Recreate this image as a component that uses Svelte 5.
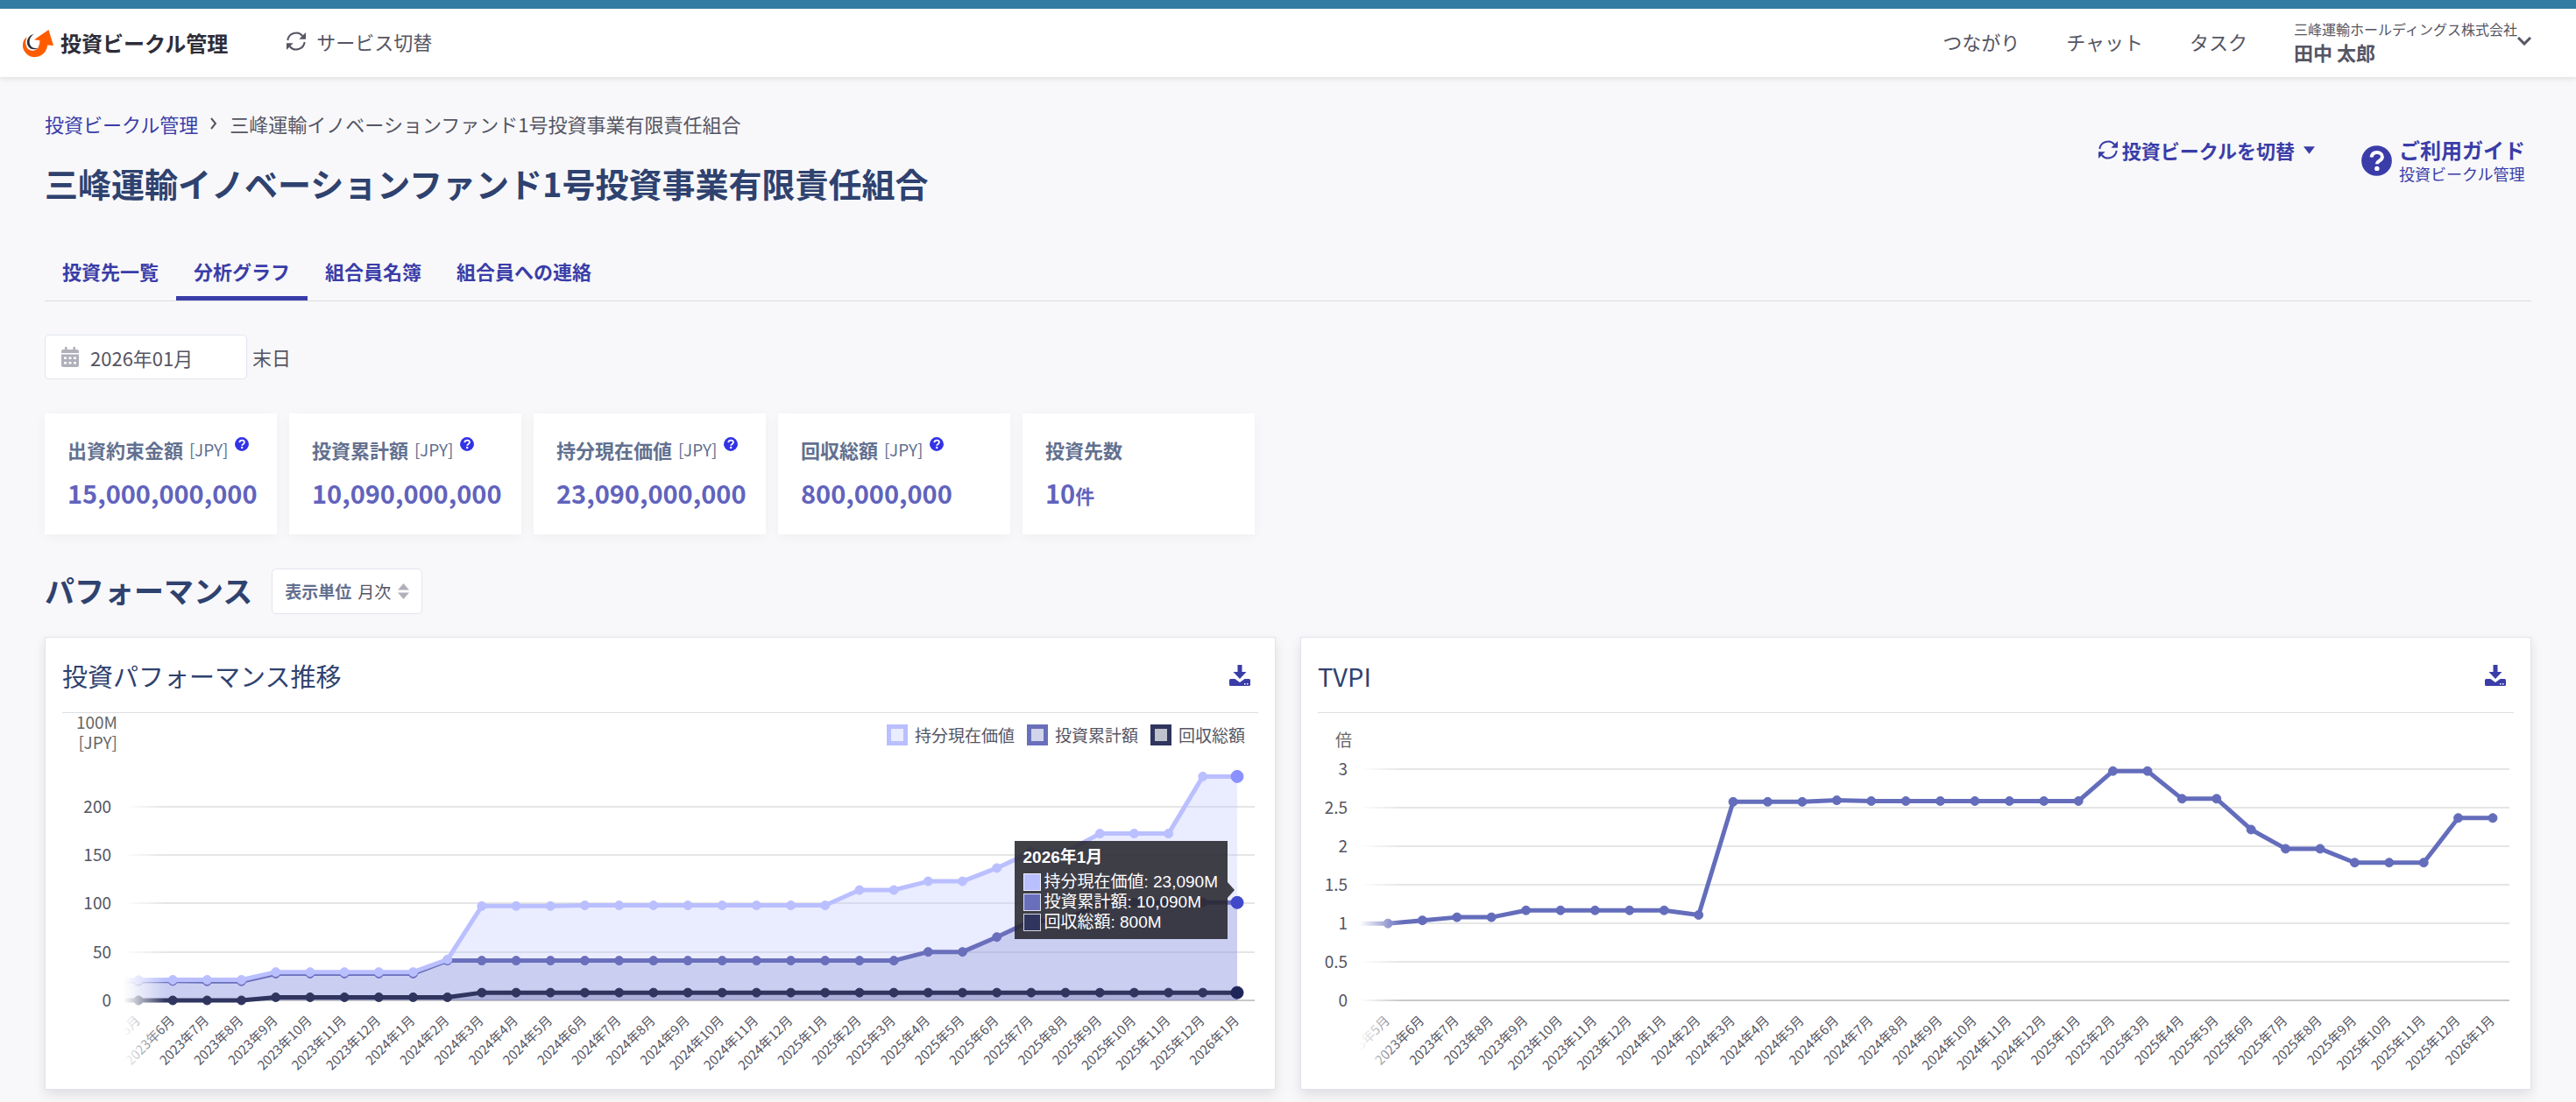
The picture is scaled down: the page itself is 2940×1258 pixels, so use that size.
<script lang="ts">
  type Series = { name: string; color: string; fill: string; active: string; values: number[] };

  const navItems = ['つながり', 'チャット', 'タスク'];
  const fundName = '三峰運輸イノベーションファンド1号投資事業有限責任組合';
  const tabs = ['投資先一覧', '分析グラフ', '組合員名簿', '組合員への連絡'];

  let activeTab = $state('分析グラフ');
  let month = $state('2026年01月');
  let unit = $state('月次');

  const stats = [
    { label: '出資約束金額', currency: true, value: '15,000,000,000' },
    { label: '投資累計額', currency: true, value: '10,090,000,000' },
    { label: '持分現在価値', currency: true, value: '23,090,000,000' },
    { label: '回収総額', currency: true, value: '800,000,000' },
    { label: '投資先数', currency: false, value: '10', suffix: '件' },
  ];

  const rep = (v: number, n: number): number[] => Array(n).fill(v);

  // 2023年5月 - 2026年1月
  const months = Array.from({ length: 33 }, (_, i) => {
    const m = i + 4;
    return `${2023 + Math.floor(m / 12)}年${(m % 12) + 1}月`;
  });

  const series: Series[] = [
    {
      name: '持分現在価値', color: '#babfff', fill: 'rgba(186, 191, 255, 0.3)', active: '#8b92ff',
      values: [20.9, ...rep(21.2, 3), ...rep(29.2, 5), 42.2, ...rep(97.3, 3), ...rep(98, 8), 113.8, 113.8,
        122.8, 122.8, 136.5, 153, 153, ...rep(172, 3), 230.9, 230.9],
    },
    {
      name: '投資累計額', color: '#6a6fbc', fill: 'rgba(106, 111, 188, 0.3)', active: '#4149cb',
      values: [20, 20, 19.7, 19.7, ...rep(27.6, 5), ...rep(41, 14), 50, 50, 65.3, 82, 82, ...rep(100.9, 5)],
    },
    {
      name: '回収総額', color: '#2f355e', fill: 'rgba(47, 53, 94, 0.3)', active: '#1f2459',
      values: [...rep(0, 4), ...rep(3.2, 6), ...rep(8, 23)],
    },
  ];

  const tvpi = [1, 1.04, 1.08, 1.08, ...rep(1.17, 5), 1.11, ...rep(2.58, 3), 2.6, ...rep(2.59, 7), 2.98, 2.98,
    2.62, 2.62, 2.22, 1.97, 1.97, ...rep(1.79, 3), 2.37, 2.37];

  const tooltipRows = ['23,090M', '10,090M', '800M'];

  const BASE = 328;
  let perfW = $state(1365);
  let tvpiW = $state(1365);

  const perf = $derived({ w: perfW, left: 70, first: 87, right: perfW - 4, scale: 1.107 });
  const ratio = $derived({ w: tvpiW, left: 48, first: 80, right: tvpiW - 5, scale: 87.85 });

  type Frame = { w: number; left: number; first: number; right: number; scale: number };
  const px = (f: Frame, i: number) => f.first + (i * (f.w - 24 - f.first)) / (months.length - 1);
  const py = (f: Frame, v: number) => BASE - v * f.scale;
  const line = (f: Frame, values: number[]) =>
    `M${f.left},${py(f, values[0])}` + values.map((v, i) => `L${px(f, i)},${py(f, v)}`).join('');
  const area = (f: Frame, values: number[]) =>
    `${line(f, values)}L${px(f, values.length - 1)},${BASE}L${f.left},${BASE}Z`;
</script>

{#snippet syncIcon()}
  <svg class="sync" viewBox="0 0 66 66" aria-hidden="true">
    <path d="M4 30A29 29 0 0 1 55 15M62 36A29 29 0 0 1 11 51" fill="none" stroke="currentColor" stroke-width="6" />
    <path d="M66 3V26H43ZM0 63V40H23Z" fill="currentColor" />
  </svg>
{/snippet}

{#snippet helpIcon()}
  <svg class="help" viewBox="0 0 512 512" aria-hidden="true">
    <circle cx="256" cy="256" r="254" fill="currentColor" />
    <path d="M168 198C176 148 210 118 260 118C312 118 350 148 350 194C350 254 262 252 262 310" fill="none" stroke="#fff" stroke-width="58" />
    <circle cx="261" cy="386" r="40" fill="#fff" />
  </svg>
{/snippet}

{#snippet chartHead(title: string)}
  <div class="chart-head">
    <h3>{title}</h3>
    <button class="download" aria-label="{title}をダウンロード">
      <svg viewBox="0 0 24 24" aria-hidden="true">
        <path d="M9.500 0h5v8h5L12 16 4.500 8h5z" />
        <path d="M1.500 16h5l5.500 4 5.500-4h5q1.500 0 1.500 1.500v5q0 1.500-1.500 1.500h-21Q0 24 0 22.500v-5Q0 16 1.500 16zm15.500 5v1.500h1.500V21zm3 0v1.500h1.500V21z" fill-rule="evenodd" />
      </svg>
    </button>
  </div>
{/snippet}

{#snippet grid(f: Frame, ticks: number[])}
  {#each ticks as t}
    <line x1={f.left - 1} x2={f.right} y1={Math.round(py(f, t))} y2={Math.round(py(f, t))} class="grid-line" class:zero={t === 0} />
  {/each}
{/snippet}

{#snippet axes(f: Frame, ticks: number[], gap: number)}
  {#each months as m, i}
    <text class="x-label" text-anchor="end" transform="translate({px(f, i) + 3} 352) rotate(-45)">{m}</text>
  {/each}
  <rect x="0" y="0" width={f.left} height="410" fill="#fff" />
  <rect x={f.left} y="0" width="48" height="410" fill="url(#fade)" />
  {#each ticks as t}
    <text class="y-label" text-anchor="end" x={f.left - gap} y={py(f, t) + 7}>{t}</text>
  {/each}
{/snippet}

<div class="page">
  <header>
    <a class="logo" href="#home">
      <svg viewBox="0 0 108 100" aria-hidden="true">
        <path d="M14 28C-2 40-4 62 6 78C16 94 34 102 52 97C72 92 85 76 87 56L108 58 91 2 40 37 60 40C60 54 55 66 45 72C32 80 16 74 12 58C10 48 11 38 14 28Z" fill="#ff5c00" />
        <path d="M42 12C18 16 6 36 12 54C20 78 40 80 54 66L58 42 36 38Z" fill="#fff" />
        <path d="M14 28C4 42 6 64 20 74C32 82 48 78 56 66L50 84 20 86 2 66Z" fill="#ff5c00" />
        <path d="M40 16C20 22 11 40 17 56C23 71 40 76 54 66C41 69 29 65 25 53C21 40 26 26 40 16Z" fill="#2f2f3a" />
      </svg>
      投資ビークル管理
    </a>
    <button class="service">{@render syncIcon()}サービス切替</button>
    <nav>
      {#each navItems as item}
        <a href="#nav">{item}</a>
      {/each}
      <button class="account">
        <span>
          <small>三峰運輸ホールディングス株式会社</small>
          <strong>田中 太郎</strong>
        </span>
        <svg viewBox="0 0 16 10" aria-hidden="true"><path d="M1 1l7 7 7-7" /></svg>
      </button>
    </nav>
  </header>

  <main>
    <div class="page-head">
      <div>
        <div class="breadcrumb">
          <a href="#vehicles">投資ビークル管理</a>
          <svg viewBox="0 0 8 14" aria-hidden="true"><path d="M1 1l5 6-5 6" /></svg>
          <span>{fundName}</span>
        </div>
        <h1>{fundName}</h1>
      </div>
      <div class="actions">
        <button class="switch">
          {@render syncIcon()}投資ビークルを切替
          <svg class="caret" viewBox="0 0 12 8" aria-hidden="true"><path d="M0 0h12L6 8z" /></svg>
        </button>
        <a class="guide" href="#guide">
          {@render helpIcon()}
          <span>
            <strong>ご利用ガイド</strong>
            <small>投資ビークル管理</small>
          </span>
        </a>
      </div>
    </div>

    <div class="tabs">
      {#each tabs as tab}
        <button class:on={activeTab === tab} onclick={() => (activeTab = tab)}>{tab}</button>
      {/each}
    </div>

    <div class="date-row">
      <div class="date">
        <svg viewBox="0 0 20 23" aria-hidden="true">
          <path d="M4 0h2.500v3h7V0H16v3h2q2 0 2 2v2H0V5q0-2 2-2h2zM0 8.500h20V21q0 2-2 2H2q-2 0-2-2zM3 11.500v2.500h3v-2.500zm5.500 0v2.500h3v-2.500zm5.500 0v2.500h3v-2.500zM3 17v2.500h3V17zm5.500 0v2.500h3V17zm5.500 0v2.500h3V17z" fill-rule="evenodd" />
        </svg>
        <input id="month" type="text" bind:value={month} />
      </div>
      <label for="month">末日</label>
    </div>

    <div class="stats">
      {#each stats as s}
        <div class="stat">
          <div class="stat-label">
            {s.label}
            {#if s.currency}<span>[JPY]</span>{@render helpIcon()}{/if}
          </div>
          <div class="stat-value">{s.value}{#if s.suffix}<small>{s.suffix}</small>{/if}</div>
        </div>
      {/each}
    </div>

    <div class="section-head">
      <h2>パフォーマンス</h2>
      <div class="unit">
        <label for="unit">表示単位</label>
        <select id="unit" bind:value={unit}>
          <option>月次</option>
          <option>年次</option>
        </select>
        <svg viewBox="0 0 13 18" aria-hidden="true"><path d="M6.500 0L13 7.500H0zM6.500 18L0 10.500h13z" /></svg>
      </div>
    </div>

    <div class="charts">
      <section class="chart-card">
        {@render chartHead('投資パフォーマンス推移')}
        <div class="plot" bind:clientWidth={perfW}>
          <svg width={perfW} height="410">
            <defs>
              <linearGradient id="fade">
                <stop offset="0" stop-color="#fff" />
                <stop offset="1" stop-color="#fff" stop-opacity="0" />
              </linearGradient>
            </defs>
            {@render grid(perf, [0, 50, 100, 150, 200])}
            {#each [...series].reverse() as s}
              <path d={area(perf, s.values)} fill={s.fill} />
            {/each}
            {#each [...series].reverse() as s}
              <path class="line" d={line(perf, s.values)} stroke={s.color} />
              {#each s.values as v, i}
                {@const color = i === s.values.length - 1 ? s.active : s.color}
                <circle class="dot" class:active={color === s.active} cx={px(perf, i)} cy={py(perf, v)} fill={color} stroke={color} />
              {/each}
            {/each}
            {@render axes(perf, [0, 50, 100, 150, 200], 14)}
            <text class="unit-label" text-anchor="end" x="63" y="18">100M</text>
            <text class="unit-label" text-anchor="end" x="63" y="41">[JPY]</text>
          </svg>
          <div class="legend">
            {#each series as s}
              <span class="legend-item">
                <i style="border-color:{s.color};background-color:{s.fill}"></i>{s.name}
              </span>
            {/each}
          </div>
          <div class="tooltip">
            <strong>2026年1月</strong>
            {#each series as s, i}
              <div class="tooltip-row"><i style="background:{s.color}"></i>{s.name}: {tooltipRows[i]}</div>
            {/each}
          </div>
        </div>
      </section>

      <section class="chart-card">
        {@render chartHead('TVPI')}
        <div class="plot" bind:clientWidth={tvpiW}>
          <svg width={tvpiW} height="410">
            {@render grid(ratio, [0, 0.5, 1, 1.5, 2, 2.5, 3])}
            <path class="line" d={line(ratio, tvpi)} stroke="#646dbb" />
            {#each tvpi as v, i}
              <circle class="dot" cx={px(ratio, i)} cy={py(ratio, v)} fill="#646dbb" stroke="#646dbb" />
            {/each}
            {@render axes(ratio, [0, 0.5, 1, 1.5, 2, 2.5, 3], 14)}
            <text class="unit-label" text-anchor="end" x="39" y="38">倍</text>
          </svg>
        </div>
      </section>
    </div>
  </main>
</div>

<style>
  :global(body) { background: #f8f8fa; }

  .page {
    --primary: #3a3da8;
    --navy: #2f426f;
    --text: #555563;
    --slate: #62708f;
    --border: #e1e5ee;
    font-family: "Noto Sans CJK JP", sans-serif;
    font-size: 22px;
    line-height: 32px;
    color: var(--text);
  }

  a { color: inherit; text-decoration: none; }
  button {
    background: none;
    border: none;
    padding: 0;
    font: inherit;
    color: inherit;
    cursor: pointer;
  }
  h1, h2, h3 { margin: 0; }
  svg { flex-shrink: 0; }

  header {
    display: flex;
    align-items: center;
    box-sizing: border-box;
    height: 88px;
    padding: 0 51px 4px 26px;
    border-top: 10px solid #327ba3;
    background: #fff;
    box-shadow: 0 2px 6px rgba(0, 0, 0, 0.1);
  }

  .logo {
    display: flex;
    align-items: center;
    gap: 8px;
    padding-top: 4px;
    font-size: 24px;
    font-weight: 700;
    color: #2d2d38;
  }
  .logo svg { width: 35px; height: 33px; }

  .sync { width: 22px; height: 22px; }
  .service {
    display: flex;
    align-items: center;
    gap: 12px;
    margin-left: 67px;
  }

  nav {
    display: flex;
    align-items: center;
    gap: 53px;
    margin-left: auto;
  }

  .account { display: flex; align-items: center; text-align: left; }
  .account small { display: block; font-size: 16px; line-height: 24px; }
  .account strong { display: block; line-height: 28px; }
  .account svg {
    width: 16px;
    height: 10px;
    fill: none;
    stroke: currentColor;
    stroke-width: 3;
  }

  main { padding: 37px 51px 14px; }

  .page-head { display: flex; justify-content: space-between; }

  .breadcrumb { display: flex; align-items: center; }
  .breadcrumb a { color: var(--primary); }
  .breadcrumb svg {
    width: 8px;
    height: 14px;
    margin: 0 14px;
    fill: none;
    stroke: currentColor;
    stroke-width: 2;
  }

  h1 {
    margin-top: 24px;
    font-size: 38px;
    line-height: 56px;
    color: var(--navy);
  }

  .actions {
    display: flex;
    align-items: flex-start;
    gap: 53px;
    padding: 30px 7px 0 0;
    color: var(--primary);
  }
  .switch { display: flex; align-items: center; gap: 5px; font-weight: 700; }
  .caret { width: 13px; height: 9px; margin-left: 5px; fill: currentColor; }
  .guide { display: flex; align-items: center; gap: 8px; }
  .guide .help { width: 35px; height: 35px; margin-top: 2px; }
  .guide strong { display: block; font-size: 24px; }
  .guide small { display: block; font-size: 18px; line-height: 22px; }

  .tabs {
    display: flex;
    margin-top: 42px;
    border-bottom: 1px solid #dcdee2;
  }
  .tabs button {
    padding: 14px 20px 13px;
    border-bottom: 5px solid transparent;
    font-weight: 700;
    color: var(--primary);
  }
  .tabs button.on { border-bottom-color: var(--primary); }

  .date-row { display: flex; align-items: center; gap: 6px; margin-top: 38px; }
  .date-row label { padding-bottom: 2px; }
  .date {
    display: flex;
    align-items: center;
    gap: 13px;
    box-sizing: border-box;
    width: 231px;
    height: 51px;
    padding: 0 18px;
    border: 1px solid var(--border);
    border-radius: 5px;
    background: #fff;
  }
  .date svg { width: 20px; height: 23px; fill: #b0b0ba; }
  .date input {
    width: 100%;
    min-width: 0;
    padding: 0;
    border: none;
    outline: none;
    background: none;
    font: inherit;
    color: inherit;
  }

  .stats { display: flex; gap: 14px; margin-top: 39px; }
  .stat {
    box-sizing: border-box;
    width: 265px;
    padding: 25px 0 28px 26px;
    background: #fff;
    box-shadow: 0 3px 13px rgba(0, 0, 0, 0.04);
  }
  .stat-label {
    display: flex;
    gap: 7px;
    font-weight: 700;
    white-space: nowrap;
    color: var(--slate);
  }
  .stat-label span { font-size: 19px; font-weight: 400; }
  .stat-label .help { width: 16px; height: 16px; margin-top: 2px; color: #3333e6; }
  .stat-value {
    margin-top: 13px;
    font-size: 29px;
    font-weight: 700;
    line-height: 40px;
    color: #6163bd;
  }
  .stat-value small { font-size: 22px; line-height: 22px; }

  .section-head { display: flex; align-items: center; gap: 22px; margin-top: 39px; }
  h2 { font-size: 34px; line-height: 48px; padding-bottom: 2px; color: var(--navy); }
  .unit {
    display: flex;
    align-items: center;
    box-sizing: border-box;
    height: 52px;
    padding: 0 14px;
    border: 1px solid var(--border);
    border-radius: 5px;
    background: #fff;
    font-size: 19px;
  }
  .unit label { font-weight: 700; color: var(--slate); }
  .unit select {
    appearance: none;
    margin: 0 7px;
    padding: 0;
    border: none;
    background: none;
    font: inherit;
    color: inherit;
  }
  .unit svg { width: 13px; height: 18px; fill: #b0b0ba; }

  .charts {
    display: grid;
    grid-template-columns: 1fr 1fr;
    gap: 28px;
    margin-top: 26px;
  }
  .chart-card {
    min-width: 0;
    padding: 0 19px 19px;
    border: 1px solid #e1e3ee;
    background: #fff;
    box-shadow: 0 6px 13px rgba(0, 0, 0, 0.1);
  }
  .chart-head {
    display: flex;
    align-items: center;
    justify-content: space-between;
    height: 85px;
    padding-right: 9px;
    border-bottom: 1px solid #dcdee2;
  }
  h3 { font-size: 29px; font-weight: 400; color: var(--navy); }
  .download { display: flex; color: var(--primary); }
  .download svg { width: 24px; height: 24px; fill: currentColor; }

  .plot { position: relative; height: 410px; }
  .plot svg { display: block; overflow: visible; }
  .grid-line { stroke: #e5e5e5; stroke-width: 2; }
  .grid-line.zero { stroke: #c8c8c8; }
  .line { fill: none; stroke-width: 5; stroke-linejoin: round; }
  .dot { r: 5px; stroke-width: 1; }
  .dot.active { r: 7px; }
  .x-label { font-size: 15px; fill: var(--text); }
  .y-label { font-size: 19px; fill: var(--text); }
  .unit-label { font-size: 19px; fill: #666; }

  .legend {
    position: absolute;
    top: 13px;
    right: 15px;
    display: flex;
    gap: 14px;
    font-size: 19px;
    line-height: 24px;
  }
  .legend-item { display: flex; align-items: center; gap: 8px; }
  .legend-item i {
    box-sizing: border-box;
    width: 24px;
    height: 24px;
    border: 5px solid;
    background-clip: padding-box;
  }

  .tooltip {
    position: absolute;
    top: 146px;
    right: 35px;
    padding: 7px 11px 8px 10px;
    background: rgba(38, 38, 46, 0.88);
    font-family: "Liberation Sans", "Noto Sans CJK JP", sans-serif;
    font-size: 19px;
    line-height: 23px;
    color: #fff;
  }
  .tooltip::after {
    content: "";
    position: absolute;
    top: 47px;
    left: 100%;
    border: 9px solid transparent;
    border-right-width: 0;
    border-left: 8px solid rgba(38, 38, 46, 0.88);
  }
  .tooltip strong { display: block; margin-bottom: 5px; }
  .tooltip-row {
    display: flex;
    align-items: center;
    gap: 4px;
    height: 23px;
    white-space: nowrap;
  }
  .tooltip-row i {
    box-sizing: border-box;
    width: 20px;
    height: 20px;
    border: 1px solid rgba(255, 255, 255, 0.8);
  }
</style>
